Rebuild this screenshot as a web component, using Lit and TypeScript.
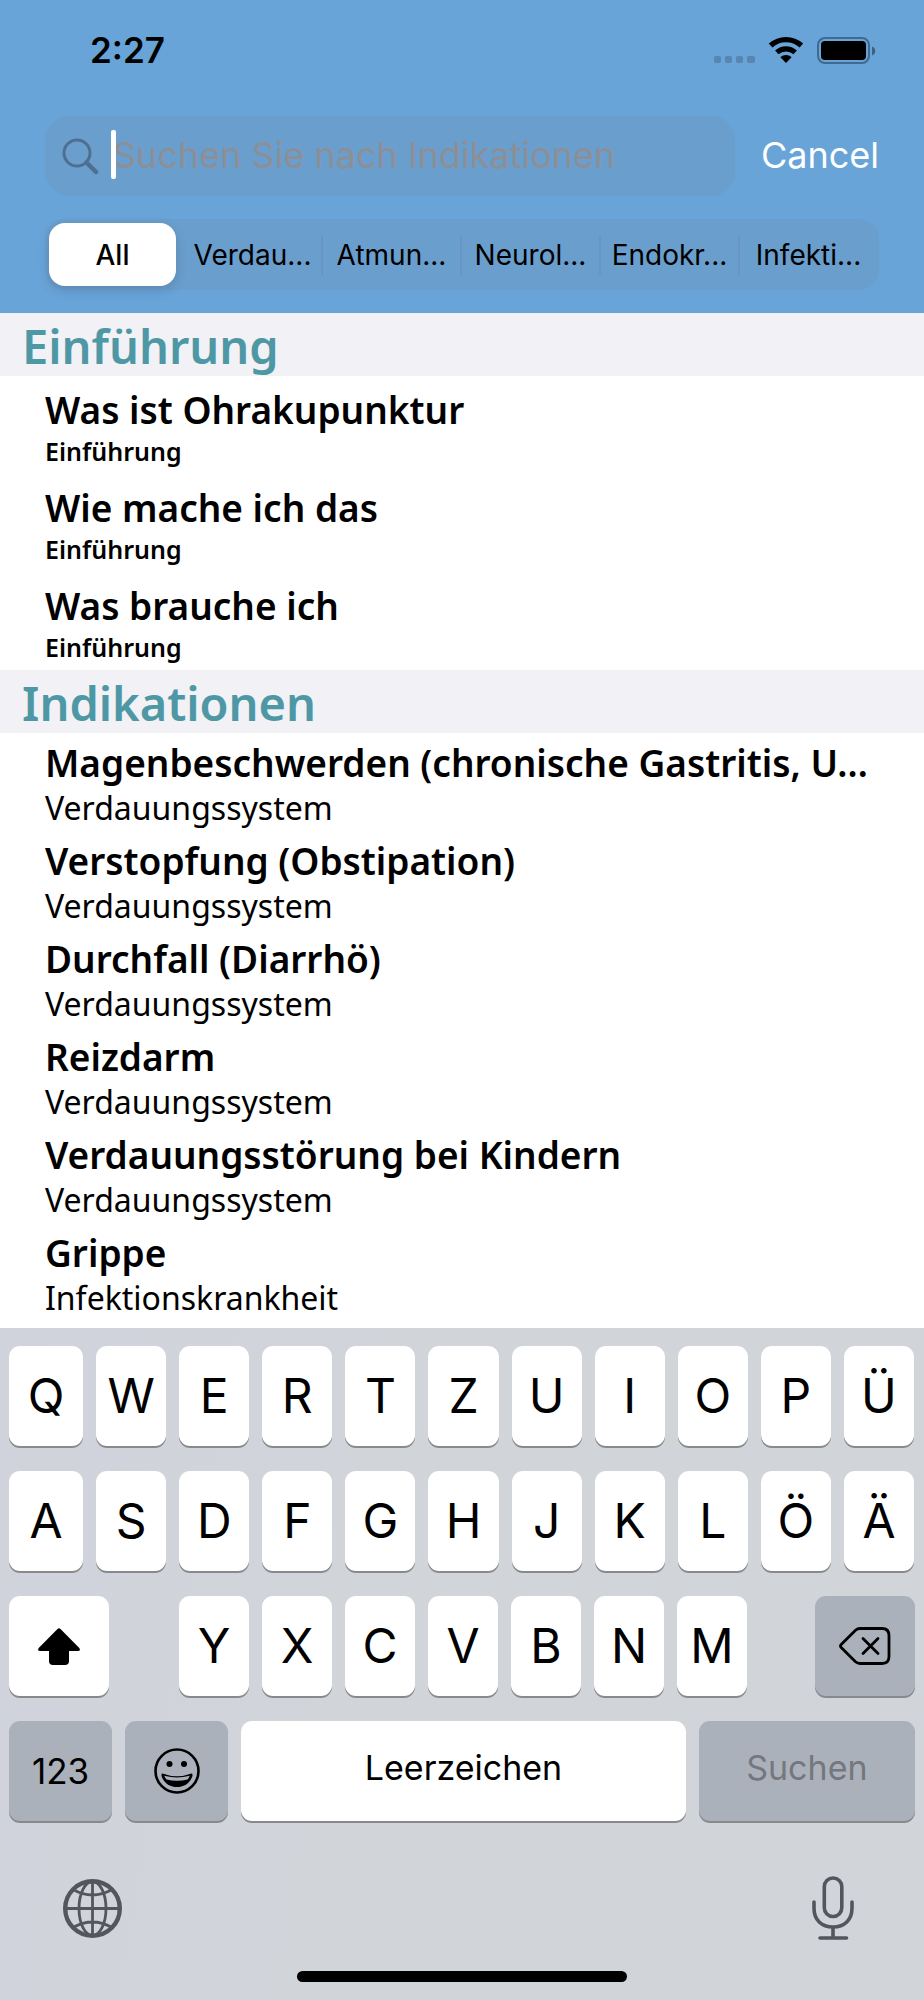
import { LitElement, html, css, nothing } from "lit";
import { customElement, property, state } from "lit/decorators.js";
import { classMap } from "lit/directives/class-map.js";

interface Entry {
  title: string;
  subtitle: string;
}

const FILTERS = ["All", "Verdau...", "Atmun...", "Neurol...", "Endokr...", "Infekti..."];

const INTRO: Entry[] = [
  { title: "Was ist Ohrakupunktur", subtitle: "Einführung" },
  { title: "Wie mache ich das", subtitle: "Einführung" },
  { title: "Was brauche ich", subtitle: "Einführung" },
];

const INDICATIONS: Entry[] = [
  { title: "Magenbeschwerden (chronische Gastritis, U…", subtitle: "Verdauungssystem" },
  { title: "Verstopfung (Obstipation)", subtitle: "Verdauungssystem" },
  { title: "Durchfall (Diarrhö)", subtitle: "Verdauungssystem" },
  { title: "Reizdarm", subtitle: "Verdauungssystem" },
  { title: "Verdauungsstörung bei Kindern", subtitle: "Verdauungssystem" },
  { title: "Grippe", subtitle: "Infektionskrankheit" },
];

@customElement("status-bar")
class StatusBar extends LitElement {
  static styles = css`
    :host {
      display: flex;
      justify-content: space-between;
      align-items: center;
      height: 100px;
      padding: 0 48px 0 90px;
      font: 600 35px/40px Inter, "Liberation Sans", sans-serif;
      color: #000;
    }
    .icons {
      display: flex;
      align-items: center;
      gap: 13px;
    }
    svg {
      display: block;
    }
  `;

  render() {
    return html`
      <span>2:27</span>
      <div class="icons">
        <svg width="41" height="28" viewBox="0 0 41 28" fill="#5686b1" aria-hidden="true">
          <rect x="0" y="20" width="7" height="7" rx="2" />
          <rect x="11" y="20" width="7" height="7" rx="2" />
          <rect x="22" y="20" width="7" height="7" rx="2" />
          <rect x="33" y="20" width="8" height="7" rx="2" />
        </svg>
        <svg width="36" height="28" viewBox="0 0 36 28" aria-hidden="true">
          <path d="M2.6 9.6C11.4 1.6 24.6 1.6 33.4 9.6" fill="none" stroke="#000" stroke-width="5.4" />
          <path d="M8.8 16.4C14.2 11.6 21.8 11.6 27.2 16.4" fill="none" stroke="#000" stroke-width="5.2" />
          <path d="M12.4 21.2C15.6 18.4 20.4 18.4 23.6 21.2L18 27Z" />
        </svg>
        <svg width="59" height="28" viewBox="0 0 59 28" aria-hidden="true">
          <rect x="1" y="2" width="51" height="25" rx="7" fill="none" stroke="#3f6a92" stroke-width="2" />
          <rect x="4" y="5" width="45" height="19" rx="4" />
          <path d="M55 10.500C59.300 11.500 59.300 18.500 55 19.500Z" fill="#3f5f7c" />
        </svg>
      </div>
    `;
  }
}

@customElement("search-header")
class SearchHeader extends LitElement {
  @state() private selected = 0;
  @state() private query = "";

  static styles = css`
    :host {
      display: block;
      padding: 16px 45px 23px;
      font-family: Inter, "Liberation Sans", sans-serif;
    }
    .row {
      display: flex;
      align-items: center;
      gap: 26px;
    }
    .box {
      position: relative;
      flex: 1;
      min-width: 0;
      display: flex;
      align-items: center;
      height: 80px;
      padding-left: 17px;
      gap: 14px;
      border-radius: 24px;
      background: #6a9ecd;
    }
    .box svg {
      flex: none;
    }
    input {
      flex: 1;
      min-width: 0;
      height: 60px;
      border: 0;
      padding: 0 0 2px;
      background: none;
      outline: none;
      font: 400 36px/44px Inter, "Liberation Sans", sans-serif;
      color: #fff;
    }
    input::placeholder {
      color: #8d8f96;
      opacity: 1;
    }
    .caret {
      position: absolute;
      left: 66px;
      top: 14px;
      width: 5px;
      height: 49px;
      border-radius: 2px;
      background: #fff;
    }
    button {
      border: 0;
      padding: 0;
      background: none;
      font-family: inherit;
      cursor: pointer;
    }
    .cancel {
      padding-bottom: 2px;
      font-size: 36px;
      line-height: 44px;
      color: #fff;
    }
    .segments {
      display: grid;
      grid-template-columns: repeat(6, minmax(0, 1fr));
      margin-top: 23px;
      height: 71px;
      border-radius: 20px;
      background: #6a9ecd;
    }
    .cell {
      display: grid;
      background: linear-gradient(#6895c1, #6895c1) right center / 2px 40px no-repeat;
    }
    .cell:first-child,
    .cell:last-child {
      background: none;
    }
    .segment {
      margin: 4px 6px 4px 4px;
      border-radius: 16px;
      font-size: 28px;
      line-height: 34px;
      white-space: nowrap;
      color: #000;
    }
    .segment.active {
      margin-right: 8px;
      background: #fff;
      font-weight: 500;
      box-shadow: 0 4px 12px rgba(0, 0, 0, 0.14);
    }
  `;

  render() {
    return html`
      <div class="row">
        <div class="box">
          <svg width="37" height="38" viewBox="0 0 37 38" fill="none" stroke="#4f6f91" aria-hidden="true">
            <circle cx="15" cy="16" r="13" stroke-width="3" />
            <path d="M24.500 25.500L34 35" stroke-width="4.500" stroke-linecap="round" />
          </svg>
          <input
            type="text"
            aria-label="Suchen Sie nach Indikationen"
            placeholder="Suchen Sie nach Indikationen"
            .value=${this.query}
            @input=${(e: Event) => (this.query = (e.target as HTMLInputElement).value)}
          />
          ${this.query ? nothing : html`<span class="caret"></span>`}
        </div>
        <button class="cancel" type="button" @click=${() => (this.query = "")}>Cancel</button>
      </div>
      <div class="segments">
        ${FILTERS.map(
          (label, i) => html`
            <div class="cell">
              <button
                type="button"
                class=${classMap({ segment: true, active: i === this.selected })}
                aria-pressed=${i === this.selected ? "true" : "false"}
                @click=${() => (this.selected = i)}
              >${label}</button>
            </div>
          `
        )}
      </div>
    `;
  }
}

@customElement("entry-section")
class EntrySection extends LitElement {
  @property() heading = "";
  @property({ attribute: false }) entries: Entry[] = [];
  @property({ type: Boolean }) compact = false;

  static styles = css`
    :host {
      display: block;
      font-family: "Noto Sans", "Open Sans", sans-serif;
    }
    h2 {
      margin: 0;
      padding: 0 22px;
      height: 63px;
      background: #f2f1f6;
      color: #4e98a5;
      font-size: 47px;
      font-weight: 600;
      line-height: 66px;
    }
    ul {
      margin: 0;
      padding: 0;
      list-style: none;
    }
    li {
      box-sizing: border-box;
      height: 98px;
      padding: 4px 45px 0;
      color: #000;
    }
    .title {
      font-size: 37px;
      font-weight: 600;
      line-height: 51px;
      white-space: nowrap;
      overflow: hidden;
    }
    .subtitle {
      font-size: 32px;
      line-height: 40px;
    }
    .compact li {
      padding-top: 8px;
    }
    .compact .subtitle {
      font-size: 25px;
      font-weight: 600;
      line-height: 32px;
    }
  `;

  render() {
    return html`
      <h2>${this.heading}</h2>
      <ul class=${classMap({ compact: this.compact })}>
        ${this.entries.map(
          (e) => html`
            <li>
              <div class="title">${e.title}</div>
              <div class="subtitle">${e.subtitle}</div>
            </li>
          `
        )}
      </ul>
    `;
  }
}

@customElement("soft-keyboard")
class SoftKeyboard extends LitElement {
  static styles = css`
    :host {
      display: flex;
      flex-direction: column;
      padding: 18px 9px;
      background: linear-gradient(100deg, #d0d3dc, #d1d4d9 40%);
      font-family: Inter, "Liberation Sans", sans-serif;
    }
    .rows {
      display: grid;
      gap: 25px;
    }
    .row {
      display: grid;
      gap: 13px;
      padding-right: 1px;
      grid-template-columns: 74fr repeat(10, 70fr);
    }
    .row.third {
      padding-right: 0;
      grid-template-columns: 100fr 44fr repeat(7, 70fr) 42fr 100fr;
    }
    .row.fourth {
      padding-right: 0;
      grid-template-columns: 103fr 103fr 444fr 216fr;
    }
    button {
      display: flex;
      align-items: center;
      justify-content: center;
      min-width: 0;
      border: 0;
      padding: 0;
      font-family: inherit;
      color: #000;
      cursor: pointer;
    }
    .key {
      height: 100px;
      border-radius: 11px;
      background: #fff;
      box-shadow: 0 2px 0 #88898c;
      font-size: 48px;
      line-height: 58px;
    }
    .key.dark {
      background: #abb1bb;
    }
    .key.word {
      font-size: 34px;
      line-height: 42px;
      padding-bottom: 6px;
    }
    .key.number {
      font-size: 35px;
      line-height: 42px;
    }
    .key:disabled {
      color: #74777d;
      cursor: default;
    }
    .tools {
      display: flex;
      justify-content: space-between;
      align-items: center;
      margin-top: 55px;
      padding: 0 61px 0 54px;
    }
    .tools button {
      background: none;
    }
    .home {
      align-self: center;
      width: 60%;
      max-width: 330px;
      height: 11px;
      margin-top: 31px;
      border-radius: 6px;
      background: #000;
    }
    svg {
      display: block;
    }
  `;

  private keys(letters: string) {
    return [...letters].map((l) => html`<button class="key" type="button">${l}</button>`);
  }

  render() {
    return html`
      <div class="rows">
        <div class="row">${this.keys("QWERTZUIOPÜ")}</div>
        <div class="row">${this.keys("ASDFGHJKLÖÄ")}</div>
        <div class="row third">
          <button class="key" type="button" aria-label="Umschalt">
            <svg width="42" height="37" viewBox="0 0 42 37">
              <path d="M19.500 1Q21 -.3 22.500 1L41.300 20Q43 22.700 40 23H31V33Q31 37 27 37H15Q11 37 11 33V23H2Q-1 22.700 .7 20Z" />
            </svg>
          </button>
          <span></span>
          ${this.keys("YXCVBNM")}
          <span></span>
          <button class="key dark" type="button" aria-label="Löschen">
            <svg width="52" height="38" viewBox="0 0 52 38" fill="none" stroke="#000" stroke-width="2.800" stroke-linecap="round" stroke-linejoin="round">
              <path d="M21 1.500H43Q50 1.500 50 8.500V29.500Q50 36.500 43 36.500H21Q18.500 36.500 16.500 34.700L2.200 20.500Q.8 19 2.200 17.500L16.500 3.300Q18.500 1.500 21 1.500Z" />
              <path d="M24 11.500L39 26.500M39 11.500L24 26.500" />
            </svg>
          </button>
        </div>
        <div class="row fourth">
          <button class="key dark number" type="button">123</button>
          <button class="key dark" type="button" aria-label="Emoji">
            <svg width="46" height="46" viewBox="0 0 46 46">
              <circle cx="23" cy="23" r="21.500" fill="none" stroke="#000" stroke-width="2.600" />
              <circle cx="15.500" cy="16" r="3" />
              <circle cx="30" cy="16" r="3" />
              <path fill-rule="evenodd" d="M8.500 25.500Q23 31 37.500 25.500Q39 25.500 38.300 28.500C35.500 36 29.500 39 23 39S10.500 36 7.700 28.500Q7 25.500 8.500 25.500ZM10.300 27.800Q11 30 12.500 31.500Q23 34 33.500 31.500Q35 30 35.700 27.800Q23 31.300 10.300 27.800Z" />
            </svg>
          </button>
          <button class="key word" type="button">Leerzeichen</button>
          <button class="key dark word" type="button" disabled>Suchen</button>
        </div>
      </div>
      <div class="tools">
        <button type="button" aria-label="Tastatur wechseln">
          <svg width="59" height="59" viewBox="0 0 59 59" fill="none" stroke="#53575d" stroke-width="2.800">
            <circle cx="29.500" cy="29.500" r="27.300" stroke-width="4.400" />
            <ellipse cx="29.500" cy="29.500" rx="13.500" ry="27" />
            <path d="M29.500 2V57M2 29.500H57M10 10.500Q29.500 21.500 49 10.500M10 48.500Q29.500 37.500 49 48.500" />
          </svg>
        </button>
        <button type="button" aria-label="Diktieren">
          <svg width="42" height="64" viewBox="0 0 42 64" fill="none" stroke="#53575d" stroke-width="3.600" stroke-linecap="round">
            <rect x="12.300" y="2" width="17.500" height="38.500" rx="8.700" />
            <path d="M2 26V32C2 44 9.500 51 21 51S40 44 40 32V26M21 51V61M8 62H34.500" />
          </svg>
        </button>
      </div>
      <div class="home"></div>
    `;
  }
}

@customElement("app-root")
class AppRoot extends LitElement {
  static styles = css`
    :host {
      display: flex;
      flex-direction: column;
      min-height: 100vh;
      background: #fff;
    }
    header {
      background: #68a4d8;
    }
    main {
      flex: 1;
      padding-bottom: 6px;
    }
  `;

  render() {
    return html`
      <header>
        <status-bar></status-bar>
        <search-header></search-header>
      </header>
      <main>
        <entry-section heading="Einführung" .entries=${INTRO} compact></entry-section>
        <entry-section heading="Indikationen" .entries=${INDICATIONS}></entry-section>
      </main>
      <soft-keyboard></soft-keyboard>
    `;
  }
}
